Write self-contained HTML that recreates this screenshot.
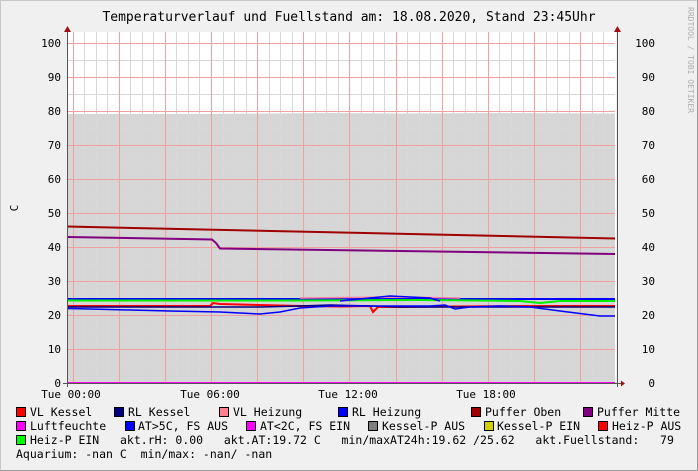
<!DOCTYPE html>
<html><head><meta charset="utf-8"><style>
body{margin:0;background:#f0f0f0;}
#w{position:relative;width:696px;height:469px;border:1px solid #c8c8c8;border-right-color:#9a9a9a;border-bottom-color:#9a9a9a;background:#f0f0f0;overflow:hidden;font-family:"DejaVu Sans Mono","Liberation Mono",monospace;font-size:11.5px;color:#000;}
.t{position:absolute;white-space:pre;line-height:14px;}
.s{position:absolute;width:8px;height:8px;border:1px solid #000;}
</style></head><body><div id="w">
<svg id="g" width="698" height="471" style="position:absolute;left:-1px;top:-1px" xmlns="http://www.w3.org/2000/svg" font-family="DejaVu Sans Mono, Liberation Mono, monospace">
<rect x="67" y="32" width="549" height="351" fill="#fff"/>
<path d="M67,114 L200,114 L330,113 L400,113.5 L500,113 L615,113.5 L615,383 L67,383 Z" fill="#d6d6d6"/>
<g id="grid"></g>
<text x="349" y="21" font-size="13" text-anchor="middle">Temperaturverlauf und Fuellstand am: 18.08.2020, Stand 23:45Uhr</text>
<text x="18" y="208" font-size="11" transform="rotate(-90 18 208)" text-anchor="middle">C</text>
<text x="688" y="60" font-size="8" fill="#b0b0b0" transform="rotate(90 688 60)" text-anchor="middle">RRDTOOL / TOBI OETIKER</text>
<g id="lab" font-size="11"></g>
<polyline fill="none" stroke="#0000ff" stroke-width="2" points="67,299 615,299"/>
<polyline fill="none" stroke="#ff80a0" stroke-width="1.5" points="300,298 400,297 460,298"/>
<polyline fill="none" stroke="#00ee00" stroke-width="2" points="67,300.5 300,300.5 420,300 480,300.5 520,301 540,303 560,301 615,301"/>
<polyline fill="none" stroke="#0000ff" stroke-width="1.5" points="340,301 360,299 390,296 410,297 430,298 440,301"/>
<polyline fill="none" stroke="#ff0000" stroke-width="2" points="67,306 210,306 213,303 220,304 300,306 340,306.5 370,306 373,312 378,307 400,307 450,306.5 520,306 615,306"/>
<polyline fill="none" stroke="#000080" stroke-width="1.5" points="67,307 260,307 300,306 330,305 370,306 400,307 615,307"/>
<polyline fill="none" stroke="#0000ff" stroke-width="1.5" points="67,308.5 90,309 130,310 170,311 220,312 260,314 280,312 300,308 330,306 360,306 400,306 430,306 445,305 455,309 470,307 500,306 530,307 560,311 600,316 615,316"/>
<polyline fill="none" stroke="#a00000" stroke-width="2" points="67,226.5 615,238.5"/>
<polyline fill="none" stroke="#800080" stroke-width="2" points="67,237 212,239.5 216,243 220,248.5 400,251 615,254"/>
<line x1="67" y1="383" x2="615" y2="383" stroke="#ff00ff" stroke-width="2"/>
<line x1="67.5" y1="30" x2="67.5" y2="387" stroke="#555"/>
<line x1="617.5" y1="30" x2="617.5" y2="387" stroke="#555"/>
<line x1="63" y1="383.5" x2="621" y2="383.5" stroke="#555"/>
<path d="M64,32 L67.5,26 L71,32 Z M614,32 L617.5,26 L621,32 Z M621,380.5 L625,383.5 L621,386.5 Z" fill="#a01010"/>
</svg>
<script>
var g=document.getElementById('grid'),s='';
for(var v=5;v<=100;v+=5){var y=Math.round(383-v*3.4)+0.5;if(v%10)s+='<line x1="67" y1="'+y+'" x2="615" y2="'+y+'" stroke="#d8d8d8" stroke-width="1"/>';}
for(var i=0;i<=47;i++){var x=Math.round(72.5+i*11.54)+0.5;if(x>615)break;if(i%4)s+='<line x1="'+x+'" y1="32" x2="'+x+'" y2="383" stroke="#d8d8d8" stroke-width="1"/>';}
for(var i=0;i<=47;i+=4){var x=Math.round(72.5+i*11.54)+0.5;if(x>615)break;s+='<line x1="'+x+'" y1="32" x2="'+x+'" y2="383" stroke="#f0a0a0" stroke-width="1"/>';}
for(var v=10;v<=100;v+=10){var y=Math.round(383-v*3.4)+0.5;s+='<line x1="67" y1="'+y+'" x2="615" y2="'+y+'" stroke="#f0a0a0" stroke-width="1"/>';}
g.innerHTML=s;
var l='';for(var v=0;v<=100;v+=10){var y=383-v*3.4+4;l+='<text x="61" y="'+y+'" text-anchor="end">'+v+'</text><text x="655" y="'+y+'" text-anchor="end">'+v+'</text>';}
var ts=[['Tue 00:00',71],['Tue 06:00',210],['Tue 12:00',348],['Tue 18:00',486]];
ts.forEach(function(t){l+='<text x="'+t[1]+'" y="398" text-anchor="middle">'+t[0]+'</text>';});
document.getElementById('lab').innerHTML=l;
</script>
<div class="s" style="left:15px;top:406px;background:#ff0000"></div><div class="t" style="left:29px;top:404px">VL Kessel</div>
<div class="s" style="left:113px;top:406px;background:#000080"></div><div class="t" style="left:127px;top:404px">RL Kessel</div>
<div class="s" style="left:218px;top:406px;background:#ff8090"></div><div class="t" style="left:232px;top:404px">VL Heizung</div>
<div class="s" style="left:337px;top:406px;background:#0000ff"></div><div class="t" style="left:351px;top:404px">RL Heizung</div>
<div class="s" style="left:470px;top:406px;background:#a00000"></div><div class="t" style="left:484px;top:404px">Puffer Oben</div>
<div class="s" style="left:582px;top:406px;background:#800080"></div><div class="t" style="left:596px;top:404px">Puffer Mitte</div>
<div class="s" style="left:15px;top:420px;background:#ff00ff"></div><div class="t" style="left:29px;top:418px">Luftfeuchte</div>
<div class="s" style="left:124px;top:420px;background:#0000ff"></div><div class="t" style="left:137px;top:418px">AT&gt;5C, FS AUS</div>
<div class="s" style="left:245px;top:420px;background:#ff00ff"></div><div class="t" style="left:259px;top:418px">AT&lt;2C, FS EIN</div>
<div class="s" style="left:367px;top:420px;background:#808080"></div><div class="t" style="left:381px;top:418px">Kessel-P AUS</div>
<div class="s" style="left:483px;top:420px;background:#d0d000"></div><div class="t" style="left:496px;top:418px">Kessel-P EIN</div>
<div class="s" style="left:597px;top:420px;background:#ff0000"></div><div class="t" style="left:611px;top:418px">Heiz-P AUS</div>
<div class="s" style="left:15px;top:434px;background:#00ff00"></div><div class="t" style="left:29px;top:432px">Heiz-P EIN   akt.rH: 0.00   akt.AT:19.72 C   min/maxAT24h:19.62 /25.62   akt.Fuellstand:   79</div>
<div class="t" style="left:15px;top:446px">Aquarium: -nan C  min/max: -nan/ -nan</div>
</div></body></html>
